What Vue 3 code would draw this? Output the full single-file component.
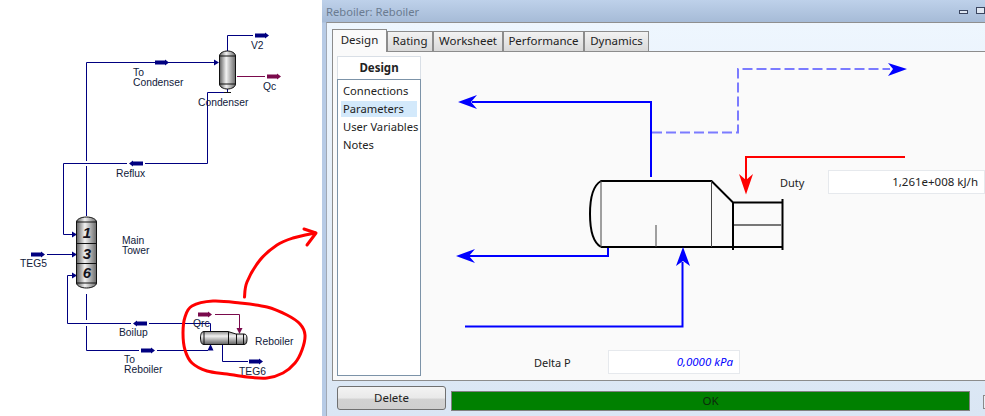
<script setup>
import { ref } from 'vue'

const tabs = ref([
  { name: 'Design', width: 55, active: true },
  { name: 'Rating', width: 46 },
  { name: 'Worksheet', width: 70 },
  { name: 'Performance', width: 81 },
  { name: 'Dynamics', width: 65 }
])
const menu = ref([
  { name: 'Connections' },
  { name: 'Parameters', active: true },
  { name: 'User Variables' },
  { name: 'Notes' }
])

// stream markers on the flowsheet: x, y, direction
const navyMarkers = [
  [155, 62.5, 1],
  [255, 35.5, 1],
  [143, 163.5, -1],
  [31, 254.5, 1],
  [147, 323.5, -1],
  [141, 350.5, 1],
  [249, 361.5, 1]
]
const plumMarkers = [
  [267, 76.5, 1],
  [198, 314.5, 1]
]
const markerPath = ([x, y, d]) =>
  `M${x} ${y - 2}h${d * 10}v-1l${d * 4} 3l${-d * 4} 3v-1h${-d * 10}z`

// x, then one [text, baseline] per line
const labels = [
  { x: 133, lines: [['To', 76], ['Condenser', 86]] },
  { x: 251, lines: [['V2', 49]] },
  { x: 263, lines: [['Qc', 90]] },
  { x: 198, lines: [['Condenser', 106]] },
  { x: 116, lines: [['Reflux', 177]] },
  { x: 122, lines: [['Main', 244], ['Tower', 254]] },
  { x: 20, lines: [['TEG5', 267]] },
  { x: 119, lines: [['Boilup', 336]] },
  { x: 193, lines: [['Qrc', 327]] },
  { x: 255, lines: [['Reboiler', 345]] },
  { x: 124, lines: [['To', 363], ['Reboiler', 373]] },
  { x: 239, lines: [['TEG6', 375]] }
]

// catmull-rom through the points, for the hand drawn red marks
const smooth = (pts, closed) => {
  const at = (i) => (closed ? pts[(i + pts.length) % pts.length] : pts[Math.max(0, Math.min(pts.length - 1, i))])
  const count = closed ? pts.length : pts.length - 1
  let d = `M${pts[0][0]} ${pts[0][1]}`
  for (let i = 0; i < count; i++) {
    const [p0, p1, p2, p3] = [at(i - 1), at(i), at(i + 1), at(i + 2)]
    const c1 = [p1[0] + (p2[0] - p0[0]) / 6, p1[1] + (p2[1] - p0[1]) / 6]
    const c2 = [p2[0] - (p3[0] - p1[0]) / 6, p2[1] - (p3[1] - p1[1]) / 6]
    d += `C${c1[0].toFixed(1)} ${c1[1].toFixed(1)} ${c2[0].toFixed(1)} ${c2[1].toFixed(1)} ${p2[0]} ${p2[1]}`
  }
  return d
}
const redLoop = smooth(
  [[192, 306], [213, 301], [240, 303], [267, 307], [287, 315], [300, 324], [305, 335], [302, 350], [295, 363], [283, 373], [267, 378], [247, 377], [227, 374], [207, 371], [192, 363], [185, 350], [183, 333], [185, 317]],
  true
)
const redArrow = smooth([[244.5, 297], [247, 282], [260, 260], [277, 245], [293, 238], [315, 233]], false)
</script>

<template>
  <div class="page">
    <div class="flowsheet">
      <svg width="322" height="416" viewBox="0 0 322 416">
        <defs>
          <linearGradient id="steel" x1="0" x2="1" y1="0" y2="0">
            <stop offset="0" stop-color="#5e5e5e" />
            <stop offset="0.42" stop-color="#f2f2f2" />
            <stop offset="1" stop-color="#686868" />
          </linearGradient>
          <linearGradient id="steelV" x1="0" x2="0" y1="0" y2="1">
            <stop offset="0" stop-color="#8a8a8a" />
            <stop offset="0.35" stop-color="#f2f2f2" />
            <stop offset="1" stop-color="#5e5e5e" />
          </linearGradient>
        </defs>

        <g class="pipe">
          <path d="M86.5 216V166M86.5 161V62.500H214" />
          <path d="M227.500 51V35.500H253" />
          <path d="M227.500 87V92.500H207.500V163.500H145M127 163.500H63.500V234.500H72" />
          <path d="M47 254.500H72" />
          <path d="M86.500 294V320M86.500 326V350.500H139M157 350.500H208" />
          <path d="M72 275.500H67.500V323.500H131M149 323.500H210.500V331" />
          <path d="M222.500 345V361.500H248" />
        </g>
        <path class="tip" d="M219 62.500l-5-3v6zM77 234.500l-5-3v6zM77 254.500l-5-3v6zM77 275.500l-5-3v6zM210.500 344l-3 6.500h6z" />
        <path d="M224 92.500h7" stroke="#111" stroke-width="1" fill="none" />

        <path class="pipe-plum" d="M237 76.500H265M215 314.500H239.500V330" />
        <path class="tip-plum" d="M239.500 334l-3-6h6z" />
        <path v-for="(m, i) in navyMarkers" :key="'n' + i" class="tip" :d="markerPath(m)" />
        <path v-for="(m, i) in plumMarkers" :key="'p' + i" class="tip-plum" :d="markerPath(m)" />

        <!-- condenser -->
        <g class="vessel">
          <path d="M219.500 56c0-3 4-5 8-5s8 2 8 5v28c0 3-4 5-8 5s-8-2-8-5z" fill="url(#steel)" />
          <path d="M219.500 56h16M219.500 84h16" />
        </g>

        <!-- main tower -->
        <g class="vessel">
          <path d="M76.500 222c0-3 5-5 10-5s10 2 10 5v61c0 3-5 5-10 5s-10-2-10-5z" fill="url(#steel)" />
          <path d="M76.500 222h20M76.500 243.500h20M76.500 263.500h20M76.500 283h20" />
        </g>
        <text class="tray" x="87" y="237.500">1</text>
        <text class="tray" x="87" y="258.500">3</text>
        <text class="tray" x="87" y="278">6</text>

        <!-- reboiler -->
        <g class="vessel">
          <path d="M204 331.500H228L236 334H244C246.500 334 247 336 247 339S246.500 344.500 244 344.500H204C201 344.500 200.500 341 200.500 338S201 331.500 204 331.500z" fill="url(#steelV)" />
          <path d="M204 331.500V344.500M228.500 332V344.500M236.500 334V344.500M243.500 334V344.500" />
        </g>

        <text v-for="(l, i) in labels" :key="i" class="label">
          <tspan v-for="line in l.lines" :key="line[0]" :x="l.x" :y="line[1]">{{ line[0] }}</tspan>
        </text>

        <path class="red" :d="redLoop" />
        <path class="red" :d="redArrow" />
        <path class="red" d="M304 229L316 233L307 245" />
      </svg>
    </div>

    <div class="window">
      <div class="titlebar">
        <span class="title">Reboiler: Reboiler</span>
        <span class="btn-min"></span>
        <span class="btn-max"></span>
      </div>
      <div class="client">
        <div class="tabs">
          <div
            v-for="tab in tabs"
            :key="tab.name"
            class="tab"
            :class="{ active: tab.active }"
            :style="{ width: tab.width + 'px' }"
          >
            {{ tab.name }}
          </div>
        </div>
        <div class="panel">
          <div class="side">
            <div class="side-head">Design</div>
            <ul class="side-list">
              <li v-for="item in menu" :key="item.name" :class="{ on: item.active }">{{ item.name }}</li>
            </ul>
          </div>
          <div class="diagram">
            <svg width="565" height="325" viewBox="425 56 565 325">
              <g fill="none" stroke-linejoin="miter">
                <path stroke="#0000ff" stroke-width="2" d="M651 177V102H472" />
                <path stroke="#0000ff" stroke-width="2" d="M608 248V256H468" />
                <path stroke="#0000ff" stroke-width="2" d="M465 326.500H682.500V262" />
                <path stroke="#7b7bff" stroke-width="2" stroke-dasharray="10 4" d="M652 132.500H738V69H890" />
                <path stroke="#ff0000" stroke-width="2" d="M905 157H746V182" />
                <path stroke="#000" stroke-width="2" d="M590 214C590 196 594 185 601 181H711.500L733 202.500H783M601 247C594 243 590 232 590 214M601 247H783" />
                <path stroke="#000" stroke-width="2" d="M733 202V250M782.500 199V250" />
                <path stroke="#444" stroke-width="1" d="M601 181V247M711.500 181V247M656 225V247" />
                <path stroke="#777" stroke-width="2" d="M734 225H782" />
              </g>
              <path fill="#0000ff" d="M458 102L477 95L471 102L477 109z" />
              <path fill="#0000ff" d="M456 256L475 249L469 256L475 263z" />
              <path fill="#0000ff" d="M683 247L690 266L683 261L676 266z" />
              <path fill="#0000ff" d="M907 69L888 63L893 69L888 76z" />
              <path fill="#ff0000" d="M746 194.500L739 174L746 180L753 174z" />
            </svg>
            <label class="field duty">
              <span class="name">Duty</span>
              <span class="value">1,261e+008 kJ/h</span>
            </label>
            <label class="field delta">
              <span class="name">Delta P</span>
              <span class="value input">0,0000 kPa</span>
            </label>
          </div>
        </div>
        <div class="footer">
          <button class="delete">Delete</button>
          <div class="status">OK</div>
          <span class="check"></span>
        </div>
      </div>
    </div>
  </div>
</template>

<style>
html,
body {
  margin: 0;
  background: #fff;
  overflow: hidden;
}
</style>

<style scoped>
.page {
  display: flex;
  width: 985px;
  height: 416px;
  overflow: hidden;
  font-family: 'Noto Sans', 'Open Sans', sans-serif;
  font-size: 11.5px;
  color: #222;
}
.flowsheet {
  flex: 0 0 322px;
  background: #fff;
  overflow: hidden;
}
.flowsheet svg {
  display: block;
}
.pipe,
.pipe-plum {
  fill: none;
  stroke: #000080;
  stroke-width: 1;
}
.pipe-plum {
  stroke: #7a0a4c;
}
.tip {
  fill: #000080;
}
.tip-plum {
  fill: #7a0a4c;
}
.vessel {
  stroke: #111;
  stroke-width: 1;
  fill: none;
}
.tray {
  font-family: 'Liberation Sans', Arial, sans-serif;
  font-size: 15px;
  font-weight: bold;
  font-style: italic;
  fill: #14141e;
  text-anchor: middle;
}
.label {
  font-family: 'Liberation Sans', Arial, sans-serif;
  font-size: 10.3px;
  fill: #10203a;
}
.red {
  fill: none;
  stroke: #ff0000;
  stroke-width: 3;
  stroke-linecap: round;
  stroke-linejoin: round;
}

.window {
  flex: 1;
  min-width: 0;
  display: flex;
  flex-direction: column;
  background: linear-gradient(#bed1ea, #a6bbd7 22px, #b7cbe6 23px);
  padding-left: 4px;
}
.titlebar {
  flex: 0 0 22px;
  display: flex;
  align-items: center;
  position: relative;
}
.title {
  color: #6a7b90;
  font-size: 11.2px;
}
.btn-min,
.btn-max {
  position: absolute;
  border: 1px solid #3b4660;
  background: #dfe7f2;
}
.btn-min {
  left: 633px;
  top: 10px;
  width: 7px;
  height: 2px;
}
.btn-max {
  left: 650px;
  top: 7px;
  width: 7px;
  height: 5px;
}
.client {
  flex: 1;
  min-height: 0;
  display: flex;
  flex-direction: column;
  border-top: 1px solid #8f8f8f;
  border-left: 1px solid #a0a8b4;
  background: linear-gradient(#eef6fe, #dae6f4);
  padding: 6px 0 0 5px;
}
.tabs {
  flex: 0 0 22px;
  display: flex;
  align-items: flex-end;
  position: relative;
  z-index: 1;
}
.tab {
  box-sizing: border-box;
  height: 20px;
  border: 1px solid #8c8c8c;
  border-bottom: none;
  background: linear-gradient(#f2f2f2, #d9d9d9);
  text-align: center;
  line-height: 18px;
}
.tab.active {
  height: 23px;
  margin-bottom: -1px;
  background: #fafafa;
  line-height: 20px;
}
.panel {
  flex: 1;
  min-height: 0;
  display: flex;
  gap: 4px;
  margin-right: -20px;
  border: 1px solid #8c8c8c;
  background: #fafafa;
  padding: 4px 0 4px 4px;
}
.side {
  flex: 0 0 84px;
  min-width: 0;
  display: flex;
  flex-direction: column;
}
.side-head {
  box-sizing: border-box;
  height: 23px;
  background: #fff;
  border: 1px solid #d9dfe6;
  border-bottom: none;
  font-weight: 700;
  text-align: center;
  line-height: 21px;
}
.side-list {
  box-sizing: border-box;
  flex: 1;
  margin: 0;
  padding: 3px;
  list-style: none;
  background: #fff;
  border: 1px solid #7c93a8;
  font-size: 11.2px;
}
.side-list li {
  height: 16px;
  line-height: 15px;
  margin-bottom: 2px;
  padding-left: 2px;
  white-space: nowrap;
}
.side-list li.on {
  background: #d3e9fb;
}
.diagram {
  flex: 1;
  position: relative;
  min-width: 0;
}
.diagram svg {
  position: absolute;
  left: 0;
  top: 0;
  display: block;
}
.field {
  position: absolute;
  display: flex;
  align-items: center;
}
.name {
  font-size: 11px;
}
.duty {
  left: 355px;
  top: 114px;
}
.duty .name {
  width: 48px;
}
.duty .value {
  width: 157px;
}
.delta {
  left: 109px;
  top: 294px;
}
.delta .name {
  width: 74px;
}
.delta .value {
  width: 132px;
  color: #0000ff;
  font-style: italic;
}
.value {
  box-sizing: border-box;
  height: 24px;
  line-height: 22px;
  padding-right: 6px;
  text-align: right;
  background: #fff;
  border: 1px solid #e6e9ed;
}
.footer {
  flex: 0 0 35px;
  display: flex;
  align-items: flex-start;
  padding-left: 5px;
  margin-right: -20px;
}
.delete {
  box-sizing: border-box;
  width: 109px;
  height: 24px;
  margin-top: 5px;
  border: 1px solid #707070;
  border-radius: 3px;
  background: linear-gradient(#f3f3f3, #e9e9e9 50%, #d2d2d2 55%, #cfcfcf);
  font: inherit;
  color: #222;
  padding: 0 0 2px;
}
.status {
  box-sizing: border-box;
  width: 519px;
  height: 20px;
  margin: 10px 0 0 5px;
  border: 1px solid #808080;
  background: #008000;
  color: #0c2a0c;
  text-align: center;
  line-height: 18px;
}
.check {
  box-sizing: border-box;
  width: 14px;
  height: 14px;
  margin: 14px 0 0 13px;
  border: 1px solid #8a8a8a;
  background: #e9eef5;
}
</style>
